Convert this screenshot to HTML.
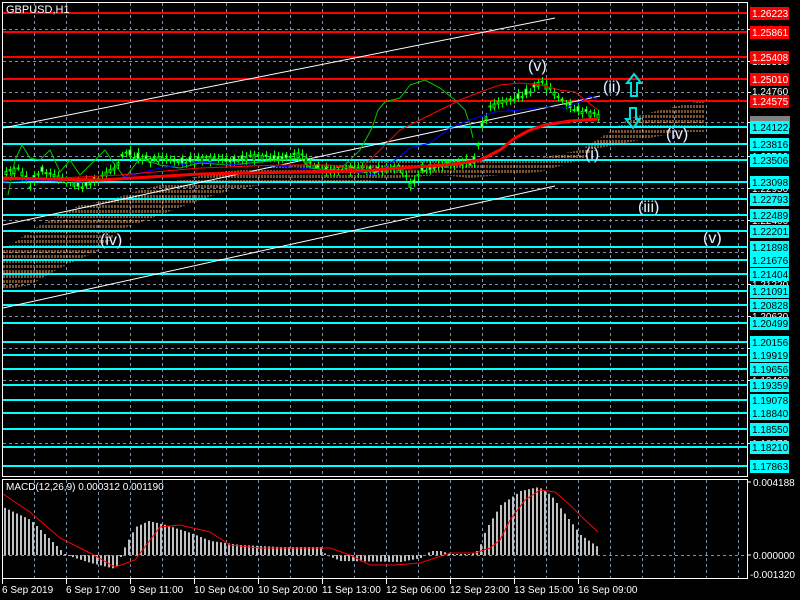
<!DOCTYPE html>
<html><head><meta charset="utf-8">
<style>
html,body{margin:0;padding:0;background:#000;width:800px;height:600px;overflow:hidden}
svg{display:block}
text{font-family:"Liberation Sans",sans-serif}
</style></head>
<body>
<svg id="s" width="800" height="600" xmlns="http://www.w3.org/2000/svg">
<defs>
<pattern id="cl" width="3" height="5" patternUnits="userSpaceOnUse">
<line x1="1" y1="0" x2="1" y2="3" stroke="#F4A460" stroke-width="1"/>
</pattern>
</defs>
<rect width="800" height="600" fill="#000"/>
<g id="grid" stroke="#8090a8" stroke-dasharray="3,3" stroke-width="1"></g>
<polygon fill="url(#cl)" points="3,250 40,225 80,205 110,200 140,190 180,180 220,172 260,168 300,165 340,163 380,160 430,158 460,160 500,160 540,158 580,150 600,138 630,118 660,110 705,100 705,132 680,132 640,140 600,148 580,160 540,172 500,175 470,178 440,175 400,178 350,183 300,183 260,185 230,190 200,200 160,215 120,230 100,250 60,268 30,285 3,290"/>
<g id="hl"></g>
<line x1="3" y1="128" x2="555" y2="18" stroke="#fff" stroke-width="1"/>
<line x1="3" y1="225" x2="600" y2="96" stroke="#fff" stroke-width="1"/>
<line x1="3" y1="308" x2="555" y2="186" stroke="#fff" stroke-width="1"/>
<g id="cand"></g>
<polyline fill="none" stroke="#00cc00" stroke-width="1" points="8,195 15,160 22,145 30,158 40,160 50,150 60,172 70,160 80,175 95,160 105,150 115,165 125,178 140,158 160,165 180,168 200,163 230,165 260,162 300,158 310,168 330,170 345,165 360,150 372,128 378,110 385,102 400,98 410,85 425,80 440,88 455,100 465,110 470,125 473,138"/>
<polyline fill="none" stroke="#0000ff" stroke-width="1" points="3,182 40,180 80,182 120,178 160,168 200,162 240,165 280,166 320,170 355,172 375,175 395,160 410,148 430,143 450,128 470,120 495,112 520,110 545,107 565,108 580,102 590,96 598,100"/>
<polyline fill="none" stroke="#ff0000" stroke-width="1" points="3,180 60,178 120,175 200,168 280,165 330,165 360,170 380,150 400,130 420,120 440,110 460,100 480,92 500,85 520,83 540,85 560,90 575,92 585,100 598,110"/>
<polyline fill="none" stroke="#ff0000" stroke-width="3" points="3,178 100,180 200,174 300,172 360,171 400,168 430,166 455,164 480,160 500,150 515,138 530,130 545,125 570,121 598,119"/>
<g font-size="16" fill="#fff" stroke="#6080c0" stroke-width="0.3">
<text x="528" y="71">(v)</text>
<text x="603" y="92">(ii)</text>
<text x="100" y="245">(iv)</text>
<text x="585" y="159">(i)</text>
<text x="666" y="139">(iv)</text>
<text x="638" y="212">(iii)</text>
<text x="703" y="243">(v)</text>
</g>
<path d="M634,74 L641,83 L637,83 L637,96 L631,96 L631,83 L627,83 Z" fill="none" stroke="#00e0e0" stroke-width="2"/>
<path d="M633,128 L640,119 L636,119 L636,108 L630,108 L630,119 L626,119 Z" fill="none" stroke="#00e0e0" stroke-width="2"/>
<rect x="2.5" y="2.5" width="745" height="474" fill="none" stroke="#fff"/>
<rect x="2.5" y="479.5" width="745" height="99" fill="none" stroke="#fff"/>
<text x="6" y="13" font-size="11" fill="#fff">GBPUSD,H1</text>
<g id="macd"></g>
<polyline fill="none" stroke="#ff0000" stroke-width="1" points="3,494 30,512 60,538 90,553 115,567 135,560 160,527 180,525 210,532 230,545 260,548 300,548 330,548 350,555 370,565 395,565 420,563 450,553 475,553 490,548 500,540 510,520 525,500 540,490 555,492 570,505 585,520 598,532"/>
<line x1="3" y1="555.5" x2="747" y2="555.5" stroke="#8090a8" stroke-dasharray="3,3"/>
<text x="6" y="490" font-size="10" fill="#fff">MACD(12,26,9) 0.000312 0.001190</text>
<g font-size="10" fill="#fff">
<text x="753" y="486">0.004188</text>
<text x="753" y="559">0.000000</text>
<text x="750" y="578">-0.001320</text>
</g>
<line x1="747" y1="482" x2="751" y2="482" stroke="#fff"/>
<line x1="747" y1="555" x2="751" y2="555" stroke="#fff"/>
<g id="tl" font-size="10" fill="#fff"></g>
<g id="pl" font-size="10"></g>
</svg>
<script>
(function(){
var ns="http://www.w3.org/2000/svg";
function el(p,t,a,txt){var e=document.createElementNS(ns,t);for(var k in a)e.setAttribute(k,a[k]);if(txt)e.textContent=txt;document.getElementById(p).appendChild(e);return e;}
for(var x=34;x<747;x+=32){el('grid','line',{x1:x+.5,y1:3,x2:x+.5,y2:476});el('grid','line',{x1:x+.5,y1:480,x2:x+.5,y2:578});}
[29,61,92,122,156,188,220,252,284,316,348,380,412,443].forEach(function(y){el('grid','line',{x1:3,y1:y+.5,x2:747,y2:y+.5});});
var red=[[13,'1.26223'],[32,'1.25861'],[57,'1.25408'],[79,'1.25010'],[101,'1.24575']];
var cy=[[127,'1.24122'],[144,'1.23816'],[160,'1.23506'],[182,'1.23098'],[199,'1.22793'],[215,'1.22489'],[231,'1.22201'],[247,'1.21898'],[260,'1.21676'],[274,'1.21404'],[291,'1.21091'],[305,'1.20828'],[323,'1.20499'],[342,'1.20156'],[355,'1.19919'],[369,'1.19656'],[385,'1.19359'],[400,'1.19078'],[413,'1.18840'],[429,'1.18550'],[447,'1.18210'],[466,'1.17863']];
[[29,'1.25940'],[61,'1.25390'],[122,'1.24285'],[156,'1.23500'],[188,'1.22950'],[220,'1.22400'],[284,'1.21220'],[316,'1.20630'],[348,'1.20060'],[380,'1.19460'],[443,'1.18870']].forEach(function(a){el('pl','text',{x:752,y:a[0]+4,fill:'#fff'},a[1]);el('pl','line',{x1:747,y1:a[0]+.5,x2:751,y2:a[0]+.5,stroke:'#fff'});});
el('pl','rect',{x:750,y:116,width:40,height:12,fill:'#808080'});
el('pl','text',{x:752,y:95,fill:'#fff'},'1.24760');el('pl','line',{x1:747,y1:92.5,x2:751,y2:92.5,stroke:'#fff'});
function lv(arr,c,tc){arr.forEach(function(a){el('hl','rect',{x:3,y:a[0]-1,width:744,height:2,fill:c});el('pl','rect',{x:750,y:a[0]-6,width:39,height:13,fill:c});el('pl','text',{x:752,y:a[0]+4,fill:tc},a[1]);});}
lv(red,'#ff0000','#fff');lv(cy,'#00ffff','#000');
var pts=[[0,175],[20,170],[30,185],[40,168],[60,180],[80,185],[100,178],[115,170],[125,150],[135,155],[150,160],[200,160],[250,158],[300,155],[310,165],[330,170],[360,170],[400,168],[412,188],[420,168],[450,165],[475,160],[480,130],[490,108],[510,100],[530,90],[540,82],[555,95],[575,108],[585,112],[600,118]];
function py(x){for(var i=0;i<pts.length-1;i++){if(x>=pts[i][0]&&x<=pts[i+1][0]){var t=(x-pts[i][0])/(pts[i+1][0]-pts[i][0]);return pts[i][1]+t*(pts[i+1][1]-pts[i][1]);}}return 118;}
for(var x=6;x<=598;x+=4){var base=py(x);var c=base+Math.sin(x*1.7)*3;var o=base+Math.cos(x*2.3)*3;
var hi=Math.min(o,c)-2-Math.abs(Math.sin(x*0.9))*3,lo=Math.max(o,c)+2+Math.abs(Math.cos(x*1.3))*3;
el('cand','line',{x1:x+.5,y1:hi,x2:x+.5,y2:lo,stroke:'#00ff00'});
var bt=Math.min(o,c),h=Math.max(1,Math.abs(o-c));
el('cand','rect',{x:x-1,y:bt,width:2,height:h,fill:c<o?'#000':'#fff',stroke:'#00ff00','stroke-width':1});}
var mp=[[0,49],[30,35],[50,15],[65,0],[90,-8],[115,-14],[125,10],[135,28],[148,34],[165,30],[190,22],[210,14],[225,12],[240,10],[280,8],[320,8],[325,0],[340,-6],[400,-7],[420,-3],[430,4],[440,4],[450,1],[470,1],[478,5],[485,25],[500,50],[520,64],[538,68],[550,60],[565,40],[580,20],[600,6]];
function mv(x){for(var i=0;i<mp.length-1;i++){if(x>=mp[i][0]&&x<=mp[i+1][0]){var t=(x-mp[i][0])/(mp[i+1][0]-mp[i][0]);return mp[i][1]+t*(mp[i+1][1]-mp[i][1]);}}return 0;}
for(var x=4;x<=598;x+=4){var v=mv(x);el('macd','rect',{x:x,y:v>0?555-v:555,width:2,height:Math.max(1,Math.abs(v)),fill:'#c0c0c0'});}
[[2,'6 Sep 2019'],[66,'6 Sep 17:00'],[130,'9 Sep 11:00'],[194,'10 Sep 04:00'],[258,'10 Sep 20:00'],[322,'11 Sep 13:00'],[386,'12 Sep 06:00'],[450,'12 Sep 23:00'],[514,'13 Sep 15:00'],[578,'16 Sep 09:00']].forEach(function(a){el('tl','text',{x:a[0],y:593},a[1]);el('tl','line',{x1:a[0]+.5,y1:579,x2:a[0]+.5,y2:584,stroke:'#fff'});});
})();
</script>
</body></html>
